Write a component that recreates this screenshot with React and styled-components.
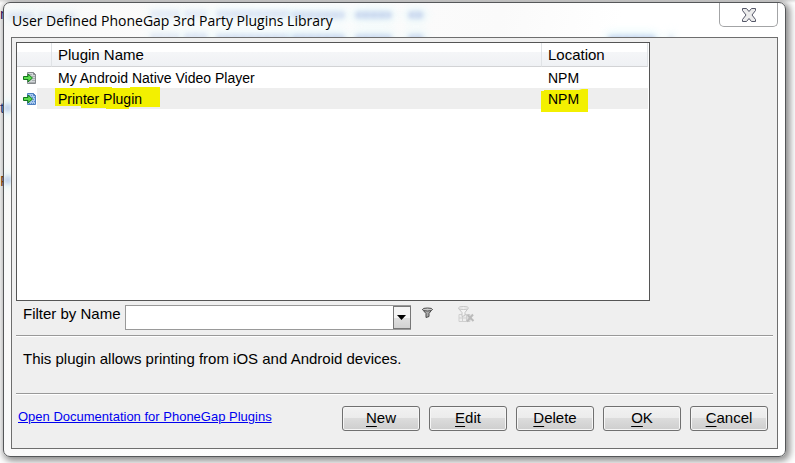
import React from "react";
import styled, { createGlobalStyle } from "styled-components";

const GlobalStyle = createGlobalStyle`
  * { box-sizing: border-box; }
  body {
    margin: 0;
    background: #fff;
    color: #000;
    font: 15px/20px "Liberation Sans", Arial, sans-serif;
  }
`;

const Desktop = styled.div`
  position: relative;
  min-height: 100vh;
  padding: 2px 9px 6px 3px;
  overflow: hidden;
  background: linear-gradient(#dcdcdc, #fff 3px);
`;

const Stray = styled.span`
  position: absolute;
  left: 0;
  top: ${(p) => p.$top}px;
  color: ${(p) => p.$color};
`;

const Window = styled.main`
  position: relative;
  padding: 0 7px 7px;
  overflow: hidden;
  border: 1px solid #555759;
  border-radius: 7px;
  background: linear-gradient(100deg, #f8f8f8 0, #fdfdfd 30%, #fafafa 58%, #fff 72%);
`;

const Shadow = styled.div`
  border-radius: 7px;
  box-shadow: 2px 2px 7px 2px rgba(0, 0, 0, 0.45);
`;

const Smudge = styled.span`
  position: absolute;
  left: ${(p) => p.$left}px;
  top: ${(p) => p.$top}px;
  width: ${(p) => p.$width}px;
  height: 8px;
  border-radius: 4px;
  background: repeating-linear-gradient(90deg, #adc4e8 0 6px, #bcd2ee 6px 8px);
  box-shadow: 0 0 7px 4px #e2f8fb;
  filter: blur(2px);
  opacity: ${(p) => p.$strength};
`;

const TitleBar = styled.header`
  position: relative;
  display: flex;
  justify-content: space-between;
  align-items: flex-start;
  height: 34px;
  padding-left: 1px;
`;

const Title = styled.h1`
  margin: 8px 0 0;
  font: 400 14px/20px "Open Sans", "Noto Sans", sans-serif;
  white-space: nowrap;
`;

const CloseButton = styled.button`
  display: grid;
  place-items: center;
  width: 59px;
  height: 24px;
  padding: 0;
  border: 1px solid #a3a4a6;
  border-top: 0;
  border-radius: 0 0 5px 5px;
  background: #fff;
`;

const Panel = styled.section`
  position: relative;
  padding: 4px 4px 17px;
  border: 1px solid #6e6e6e;
  background: #efefef;
`;

const ListBox = styled.div`
  margin-right: 123px;
  height: 259px;
  border: 1px solid #555;
  background: #fff;
`;

const Table = styled.table`
  width: calc(100% - 1px);
  border-collapse: separate;
  border-spacing: 0;
  table-layout: fixed;
`;

const IconCol = styled.col`
  width: 35px;
`;

const LocationCol = styled.col`
  width: 106px;
`;

const HeadCell = styled.th`
  height: 24px;
  padding: 1px 0 0 6px;
  border-right: 1px solid #e0e3e6;
  border-bottom: 1px solid #d2d3d5;
  background: linear-gradient(#fff 0 9px, #f5f6f8 9px, #eff1f4);
  font-weight: 400;
  line-height: 20px;
  text-align: left;
`;

const Row = styled.tr`
  --fill: ${(p) => (p.$selected ? "#eeeeee" : "#ffffff")};
`;

const Cell = styled.td`
  height: 21px;
  padding: 0 0 0 6px;
  background: var(--fill);
  font-size: 14px;
  line-height: 20px;
  white-space: nowrap;
`;

const IconCell = styled(Cell)`
  background: linear-gradient(90deg, #fff 20px, var(--fill) 20px);
  svg { display: block; }
`;

const Marked = styled.span`
  position: relative;
  display: inline-block;
  svg {
    position: absolute;
    left: -3px;
    top: -2px;
    overflow: visible;
  }
`;

const MarkedText = styled.span`
  position: relative;
`;

const FilterRow = styled.div`
  display: flex;
  align-items: flex-start;
  gap: 4px;
  padding: 4px 0 0 7px;
  height: 34px;
`;

const FilterLabel = styled.label`
  line-height: 18px;
  white-space: nowrap;
`;

const Combo = styled.div`
  position: relative;
  width: 286px;
`;

const Select = styled.select`
  display: block;
  width: 100%;
  height: 25px;
  padding: 0 24px 0 4px;
  border: 1px solid #999;
  border-radius: 0;
  appearance: none;
  background: #fff;
  font: inherit;
`;

const Arrow = styled.span`
  position: absolute;
  right: 0;
  top: 1px;
  display: grid;
  place-items: center;
  width: 18px;
  height: 23px;
  border: 1px solid #777;
  background: linear-gradient(#f4f4f4 0 50%, #e0e0e0 50%, #d2d2d2);
  pointer-events: none;
`;

const ToolButtons = styled.div`
  display: flex;
  gap: 21px;
  padding-left: 6px;
`;

const ToolButton = styled.button`
  display: block;
  width: 16px;
  height: 18px;
  padding: 0;
  border: 0;
  background: none;
  svg { display: block; }
`;

const Description = styled.p`
  min-height: 59px;
  margin: 0;
  padding: 13px 7px 0;
  border: solid #999;
  border-width: 1px 0;
  box-shadow: inset 0 1px #fff, 0 1px #fff;
`;

const Footer = styled.footer`
  display: flex;
  justify-content: space-between;
  align-items: flex-start;
  padding: 12px 5px 0 2px;
`;

const DocLink = styled.a`
  font-size: 13px;
  line-height: 22px;
  color: #0000f0;
`;

const Buttons = styled.div`
  display: flex;
  gap: 9px;
`;

const Button = styled.button`
  width: 78px;
  height: 25px;
  padding: 0 0 1px;
  border: 1px solid #707070;
  border-radius: 3px;
  background: linear-gradient(#f2f2f2, #ebebeb 50%, #dcdcdc 50%, #cecece);
  box-shadow: inset 0 0 0 1px #f6f6f6;
  color: #000;
  font: inherit;
`;

const Key = styled.span`
  text-decoration: underline;
  text-underline-offset: 3px;
  text-decoration-thickness: 1px;
  text-decoration-skip-ink: none;
`;

const smudges = [
  [4, 9, 26, 0.35], [34, 9, 38, 0.25],
  [146, 7, 30, 0.3], [180, 7, 24, 0.3], [212, 7, 76, 0.4], [288, 8, 53, 0.5], [351, 8, 37, 0.6], [404, 8, 16, 0.6],
  [146, 30, 30, 0.3], [180, 30, 24, 0.4], [212, 31, 76, 0.5], [288, 31, 53, 0.6], [351, 31, 37, 0.6], [404, 31, 16, 0.6],
  [604, 32, 48, 0.7], [665, 32, 4, 0.4],
  [0, 101, 8, 0.8], [0, 173, 8, 0.8],
];

const buttons = ["New", "Edit", "Delete", "OK", "Cancel"];

function PluginIcon({ selected }) {
  const paper = selected ? "#a9c9ee" : "#d2d6d9";
  const edge = selected ? "#4d7fc0" : "#85898c";
  return (
    <svg width="14" height="14" viewBox="0 0 14 14" aria-hidden="true">
      <path d="M4.5 1.5h6l2 2v9h-8z" fill={paper} stroke={edge} />
      <path d="M10.5 1.5v2h2" fill="none" stroke={edge} />
      <path
        d="M6 3.5h3M9 5.5h3M10 7.5h2M9 9.5h3M6 11.5h6"
        stroke={selected ? "#5b8fd0" : "#a9adb0"}
        strokeDasharray={selected ? "1 1" : undefined}
      />
      <path d="M.5 5.500h4.500v-2.500l4.500 4-4.500 4v-2.500h-4.500z" fill="#5bdc4e" stroke="#14751c" />
    </svg>
  );
}

function Highlight({ shape }) {
  return (
    <svg width="105" height="23" aria-hidden="true">
      <path d={shape} fill="#f3f000" />
    </svg>
  );
}

export default function App() {
  return (
    <>
      <GlobalStyle />
      <Desktop>
        <Stray $top={4} $color="#30105a">n</Stray>
        <Stray $top={98} $color="#203878">t</Stray>
        <Stray $top={171} $color="#704010">F</Stray>
        <Shadow>
          <Window>
            {smudges.map(([left, top, width, strength]) => (
              <Smudge key={`${left}-${top}`} $left={left} $top={top} $width={width} $strength={strength} />
            ))}
            <TitleBar>
              <Title>User Defined PhoneGap 3rd Party Plugins Library</Title>
              <CloseButton aria-label="Close">
                <svg width="16" height="14" viewBox="0 0 16 14">
                  <path
                    d="M1.5.5h4L8 3.500 10.500.5h4v2L11 7l3.500 4.500v2h-4L8 10.500 5.500 13.500h-4v-2L5 7 1.500 2.500z"
                    fill="#ececec"
                    stroke="#555768"
                    strokeLinejoin="round"
                  />
                </svg>
              </CloseButton>
            </TitleBar>
            <Panel>
              <ListBox>
                <Table>
                  <colgroup>
                    <IconCol />
                    <col />
                    <LocationCol />
                  </colgroup>
                  <thead>
                    <tr>
                      <HeadCell aria-label="Type" />
                      <HeadCell>Plugin Name</HeadCell>
                      <HeadCell>Location</HeadCell>
                    </tr>
                  </thead>
                  <tbody>
                    <Row>
                      <IconCell><PluginIcon /></IconCell>
                      <Cell>My Android Native Video Player</Cell>
                      <Cell>NPM</Cell>
                    </Row>
                    <Row $selected>
                      <IconCell><PluginIcon selected /></IconCell>
                      <Cell>
                        <Marked>
                          <Highlight shape="M0 1h34v-1h23v1h18v-1h30v20h-31v2h-23v-1h-25v-2h-26z" />
                          <MarkedText>Printer Plugin</MarkedText>
                        </Marked>
                      </Cell>
                      <Cell>
                        <Marked>
                          <Highlight shape="M-4 4h3v-1h35l3-1h6v23h-47z" />
                          <MarkedText>NPM</MarkedText>
                        </Marked>
                      </Cell>
                    </Row>
                  </tbody>
                </Table>
              </ListBox>
              <FilterRow>
                <FilterLabel htmlFor="filter">Filter by Name</FilterLabel>
                <Combo>
                  <Select id="filter" defaultValue="">
                    <option value="" aria-label="No filter" />
                  </Select>
                  <Arrow>
                    <svg width="9" height="5" viewBox="0 0 9 5"><path d="M0 0h9L4.500 5z" /></svg>
                  </Arrow>
                </Combo>
                <ToolButtons>
                  <ToolButton aria-label="Apply filter">
                    <svg width="16" height="18" viewBox="0 0 16 18">
                      <path d="M1.500 4.500 5 8.500v4l3-1v-3l3-4z" fill="#aaa" stroke="#4a4a4a" />
                      <ellipse cx="6.500" cy="4.500" rx="5" ry="1.500" fill="#ccc" stroke="#4a4a4a" />
                    </svg>
                  </ToolButton>
                  <ToolButton aria-label="Clear filter" disabled>
                    <svg width="17" height="18" viewBox="0 0 17 18">
                      <path d="M1 9.500h11v7h-11zM1 13h11M4.500 9v8M8.500 9v8" fill="#eee" stroke="#cfcfcf" />
                      <path d="M.5 3.500 4 7.500v4l3-1v-3l3-4z" fill="#f4f4f4" stroke="#c4c4c4" />
                      <ellipse cx="5.500" cy="3" rx="5" ry="1.500" fill="#eee" stroke="#c4c4c4" />
                      <path d="m9.500 10 6 6M15 9.500l-6 7" stroke="#bbb" strokeWidth="2" />
                    </svg>
                  </ToolButton>
                </ToolButtons>
              </FilterRow>
              <Description>This plugin allows printing from iOS and Android devices.</Description>
              <Footer>
                <DocLink href="#docs">Open Documentation for PhoneGap Plugins</DocLink>
                <Buttons>
                  {buttons.map((label) => (
                    <Button key={label}><Key>{label[0]}</Key>{label.slice(1)}</Button>
                  ))}
                </Buttons>
              </Footer>
            </Panel>
          </Window>
        </Shadow>
      </Desktop>
    </>
  );
}
